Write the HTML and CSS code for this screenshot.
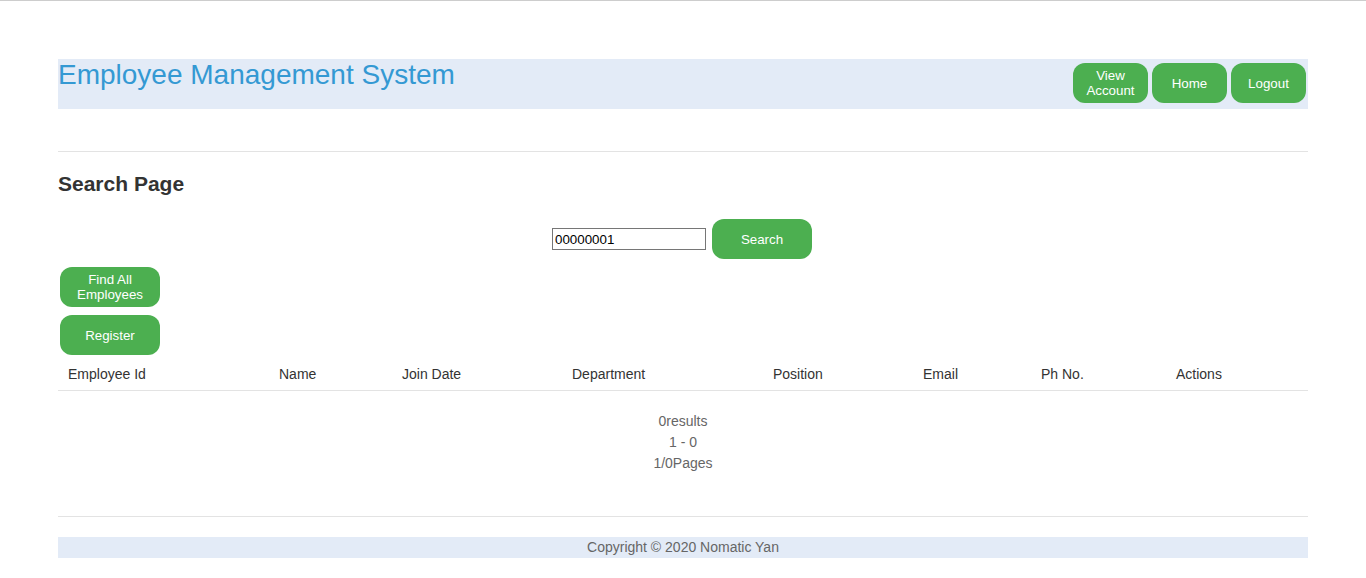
FILE: index.html
```html
<!DOCTYPE html>
<html>
<head>
<meta charset="utf-8">
<title>Employee Management System</title>
<link rel="stylesheet" href="styles.css">
</head>
<body>
<div class="topline"></div>
<div class="container">
  <header class="header">
    <h1 class="title">Employee Management System</h1>
    <nav class="nav">
      <button class="btn nav-btn">View Account</button>
      <button class="btn nav-btn">Home</button>
      <button class="btn nav-btn">Logout</button>
    </nav>
  </header>
  <hr class="rule rule-top">
  <h2 class="page-title">Search Page</h2>
  <form class="search-row">
    <input class="search-input" type="text" value="00000001">
    <button class="btn search-btn" type="button">Search</button>
  </form>
  <div class="actions">
    <button class="btn side-btn">Find All Employees</button>
    <button class="btn side-btn">Register</button>
  </div>
  <div class="table-head">
    <div class="th">Employee Id</div>
    <div class="th">Name</div>
    <div class="th">Join Date</div>
    <div class="th">Department</div>
    <div class="th">Position</div>
    <div class="th">Email</div>
    <div class="th">Ph No.</div>
    <div class="th">Actions</div>
  </div>
  <div class="results">
    <div>0results</div>
    <div>1 - 0</div>
    <div>1/0Pages</div>
  </div>
  <hr class="rule rule-bottom">
  <footer class="footer">Copyright © 2020 Nomatic Yan</footer>
</div>
</body>
</html>
```

FILE: styles.css
```css
html, body {
  margin: 0;
  padding: 0;
  background: #fff;
  font-family: "Liberation Sans", Arial, sans-serif;
  color: #333;
}
.topline {
  height: 1px;
  background: #cdcdcd;
}
.container {
  width: 1250px;
  margin: 0 auto;
}
.header {
  margin-top: 58px;
  height: 50px;
  background: #e3ebf7;
  display: flex;
  justify-content: space-between;
  align-items: flex-start;
}
.title {
  margin: 0;
  font-size: 28px;
  font-weight: normal;
  line-height: 32px;
  color: #3499d3;
}
.nav {
  display: flex;
  padding-top: 4px;
}
.btn {
  background: #4caf50;
  color: #fff;
  border: none;
  border-radius: 12px;
  font-family: "Liberation Sans", Arial, sans-serif;
  font-size: 13.333px;
  line-height: 15px;
  padding: 0 4px;
  cursor: pointer;
}
.nav-btn {
  width: 75px;
  height: 40px;
  margin: 0 2px;
}
.rule {
  border: none;
  height: 1px;
  background: #e3e3e3;
  margin: 0;
}
.rule-top {
  margin-top: 42px;
}
.page-title {
  margin: 19px 0 0;
  font-size: 21px;
  line-height: 25px;
  font-weight: bold;
  color: #333;
}
.search-row {
  margin: 23px 0 0;
  display: flex;
  justify-content: center;
  align-items: center;
  gap: 6px;
  padding-right: 2px;
}
.search-input {
  box-sizing: border-box;
  width: 154px;
  height: 22px;
  border: 1px solid #767676;
  padding: 1px 2px;
  font-family: "Liberation Sans", Arial, sans-serif;
  font-size: 13.333px;
  color: #000;
  margin: 0;
}
.search-btn {
  width: 100px;
  height: 40px;
}
.actions {
  margin-top: 8px;
  display: flex;
  flex-direction: column;
  align-items: flex-start;
  gap: 8px;
  padding-left: 2px;
}
.side-btn {
  width: 100px;
  height: 40px;
}
.table-head {
  margin-top: 3px;
  display: grid;
  grid-template-columns: 211px 123px 170px 201px 150px 118px 135px 142px;
  border-bottom: 1px solid #e3e3e3;
}
.th {
  padding: 8px 10px;
  font-size: 14px;
  line-height: 16px;
  color: #333;
}
.results {
  padding-top: 20px;
  text-align: center;
  font-size: 14px;
  line-height: 21px;
  color: #666;
}
.rule-bottom {
  margin-top: 42px;
}
.footer {
  margin-top: 20px;
  background: #e3ebf7;
  height: 21px;
  line-height: 21px;
  text-align: center;
  font-size: 14px;
  color: #666;
}
```
